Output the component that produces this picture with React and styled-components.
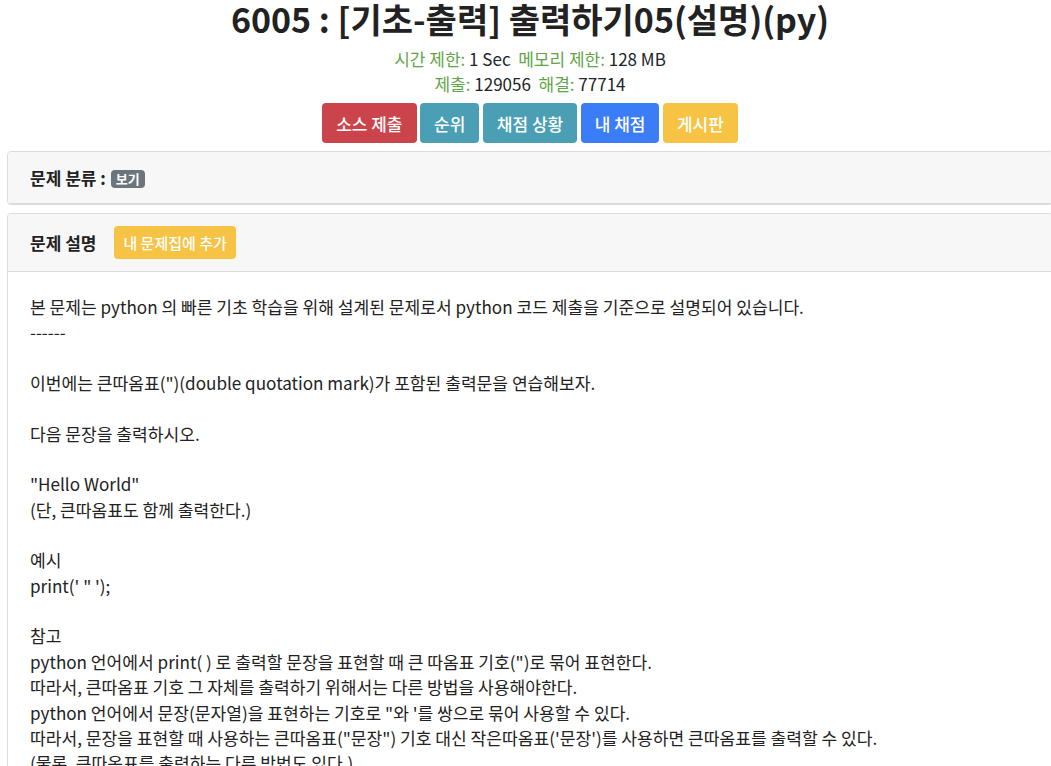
import React from "react";
import styled, { createGlobalStyle } from "styled-components";

const GlobalStyle = createGlobalStyle`
  html, body {
    margin: 0;
    padding: 0;
    background: #fff;
    overflow: hidden;
  }
  body {
    font-family: "Noto Sans CJK KR", "Noto Sans", sans-serif;
    color: #212529;
    font-size: 17px;
  }
`;

const Page = styled.div`
  width: 1046px;
  margin-left: 7px;
`;

const Title = styled.h1`
  margin: 0;
  font-size: 34px;
  line-height: 38px;
  font-weight: 700;
  text-align: center;
  color: #222;
`;

const Meta = styled.div`
  margin-top: 8px;
  text-align: center;
  line-height: 25px;
  font-size: 17px;
`;

const Label = styled.span`
  color: #62a548;
`;

const Buttons = styled.div`
  display: flex;
  justify-content: center;
  gap: 3.5px;
  margin-top: 7px;
`;

const colors = {
  danger: "#cc444b",
  info: "#4a9fb5",
  primary: "#3a7df6",
  warning: "#f6c344",
};

const Button = styled.button`
  height: 40px;
  padding: 0 14px;
  border: none;
  border-radius: 4px;
  background: ${(p) => colors[p.$variant]};
  color: #fff;
  font-family: inherit;
  font-size: 17px;
  font-weight: 500;
`;

const Card = styled.section`
  margin-top: 8px;
  border: 1px solid #dcdcdc;
  border-radius: 4px;
  overflow: hidden;
  background: #fff;
`;

const CardHeader = styled.div`
  display: flex;
  align-items: center;
  gap: 18px;
  padding: ${(p) => (p.$tall ? "12px 22px" : "13px 22px")};
  background: #f7f7f7;
  border-bottom: 1px solid #dcdcdc;
  line-height: 25px;
`;

const Heading = styled.span`
  font-size: 17px;
  font-weight: 700;
  color: #222;
`;

const Badge = styled.span`
  display: inline-block;
  margin-left: 5px;
  padding: 0 5px;
  background: #6c757d;
  color: #fff;
  font-size: 13px;
  line-height: 18px;
  border-radius: 4px;
  vertical-align: 1px;
`;

const SmallButton = styled.button`
  height: 33px;
  padding: 0 9px;
  border: none;
  border-radius: 4px;
  background: #f6c344;
  color: #fff;
  font-family: inherit;
  font-size: 15px;
  font-weight: 500;
`;

const CardBody = styled.div`
  padding: 22px 22px 0;
  line-height: 25.35px;
  font-size: 17.1px;
  white-space: pre-line;
  color: #222;
`;

const description = `본 문제는 python 의 빠른 기초 학습을 위해 설계된 문제로서 python 코드 제출을 기준으로 설명되어 있습니다.
------

이번에는 큰따옴표(")(double quotation mark)가 포함된 출력문을 연습해보자.

다음 문장을 출력하시오.

"Hello World"
(단, 큰따옴표도 함께 출력한다.)

예시
print(' " ');

참고
python 언어에서 print( ) 로 출력할 문장을 표현할 때 큰 따옴표 기호(")로 묶어 표현한다.
따라서, 큰따옴표 기호 그 자체를 출력하기 위해서는 다른 방법을 사용해야한다.
python 언어에서 문장(문자열)을 표현하는 기호로 "와 '를 쌍으로 묶어 사용할 수 있다.
따라서, 문장을 표현할 때 사용하는 큰따옴표("문장") 기호 대신 작은따옴표('문장')를 사용하면 큰따옴표를 출력할 수 있다.
(물론, 큰따옴표를 출력하는 다른 방법도 있다.)`;

export default function App() {
  return (
    <>
      <GlobalStyle />
      <Page>
        <Title>6005 : [기초-출력] 출력하기05(설명)(py)</Title>
        <Meta>
          <div>
            <Label>시간 제한:</Label> 1 Sec&nbsp; <Label>메모리 제한:</Label> 128 MB
          </div>
          <div>
            <Label>제출:</Label> 129056&nbsp; <Label>해결:</Label> 77714
          </div>
        </Meta>
        <Buttons>
          <Button $variant="danger">소스 제출</Button>
          <Button $variant="info">순위</Button>
          <Button $variant="info">채점 상황</Button>
          <Button $variant="primary">내 채점</Button>
          <Button $variant="warning">게시판</Button>
        </Buttons>
        <Card>
          <CardHeader>
            <Heading>
              문제 분류 :<Badge>보기</Badge>
            </Heading>
          </CardHeader>
        </Card>
        <Card>
          <CardHeader $tall>
            <Heading>문제 설명</Heading>
            <SmallButton>내 문제집에 추가</SmallButton>
          </CardHeader>
          <CardBody>{description}</CardBody>
        </Card>
      </Page>
    </>
  );
}
